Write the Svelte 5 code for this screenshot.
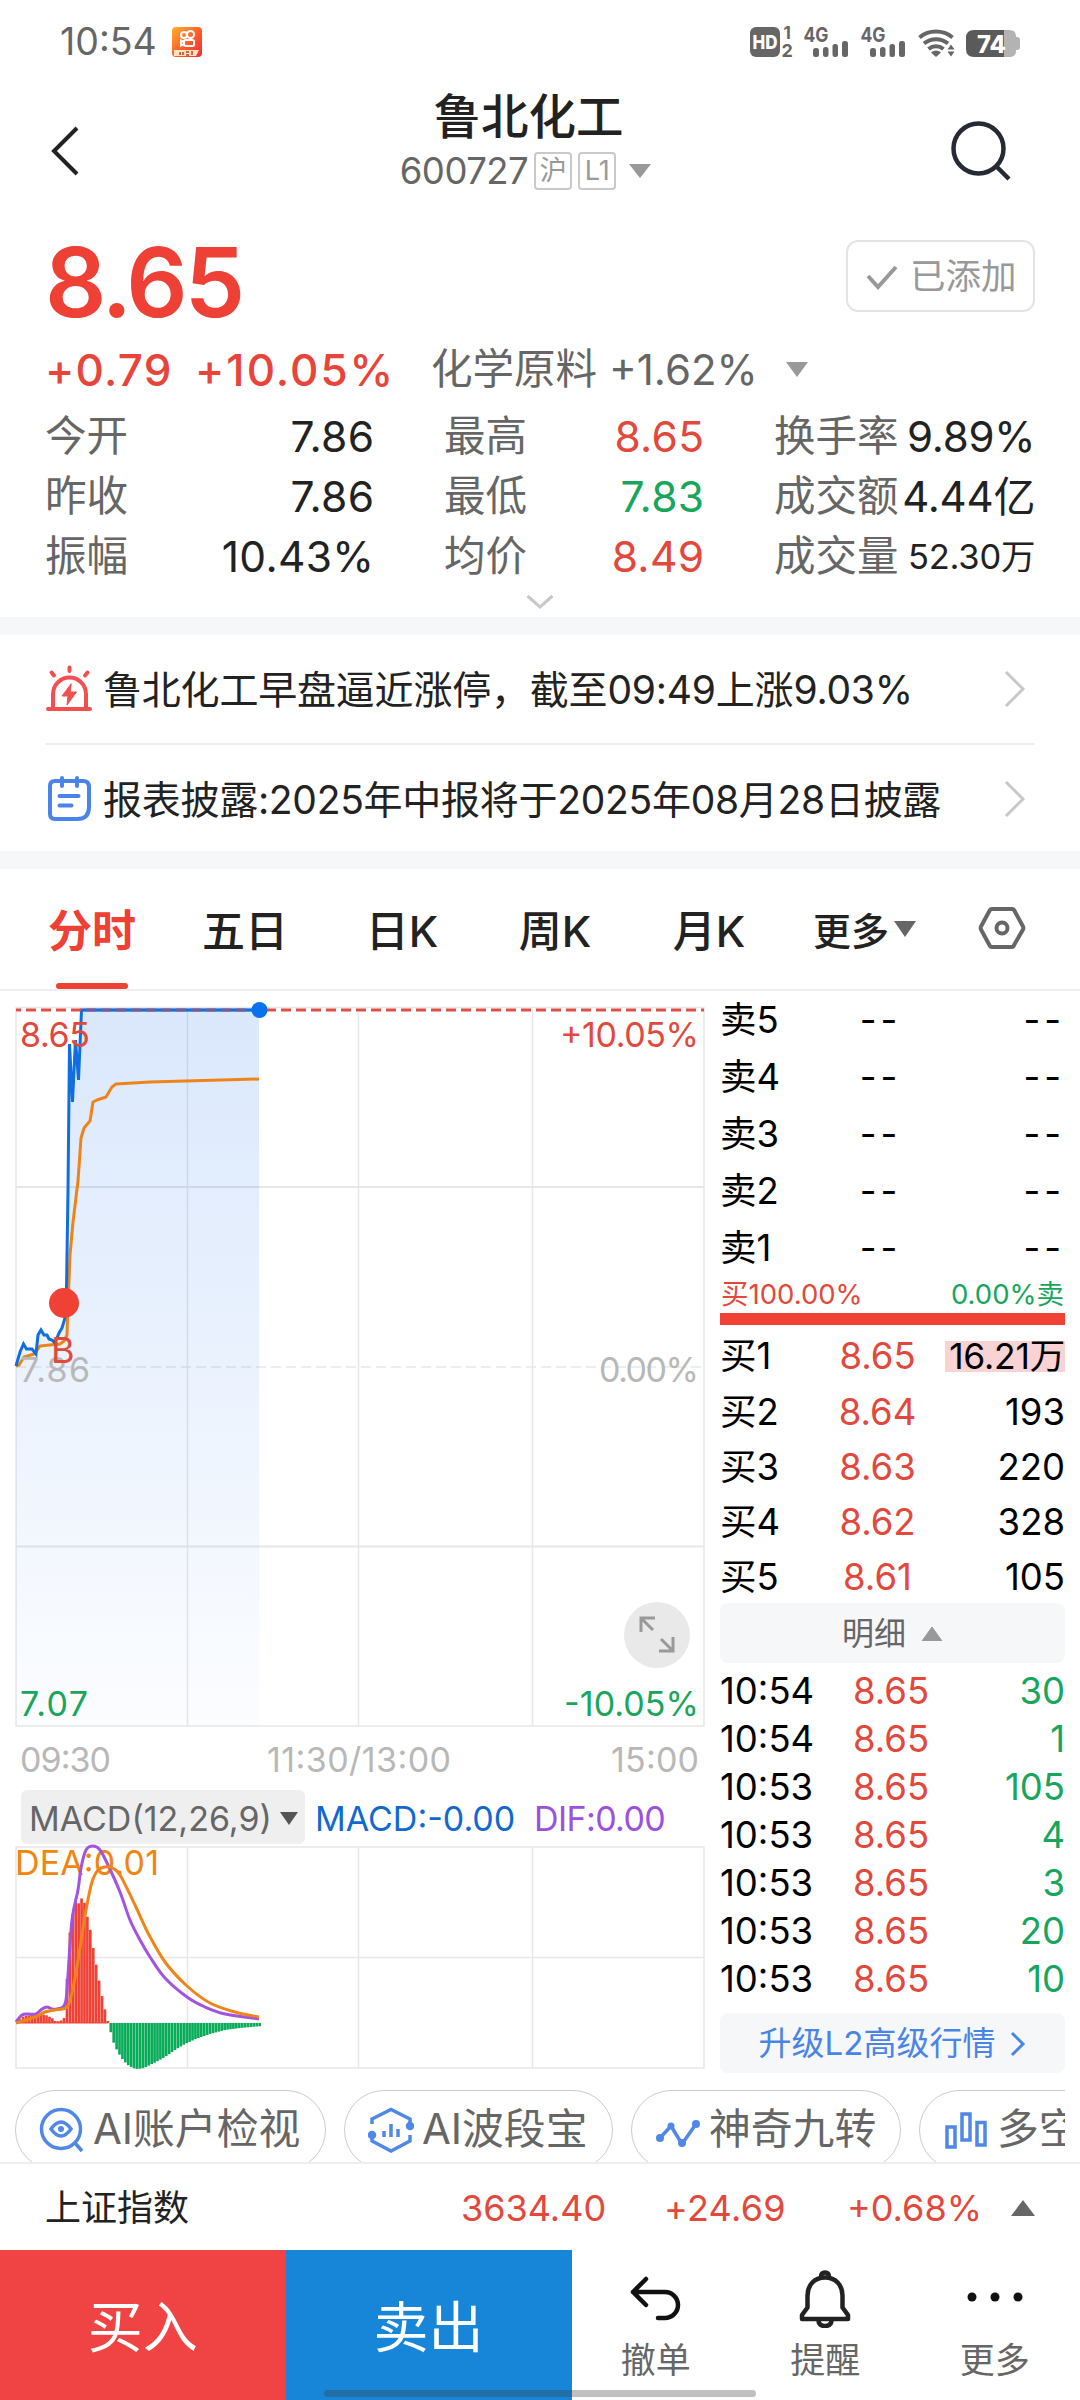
<script lang="ts">
	type Stat = { label: string; value: string; tone?: string; small?: boolean };

	const stats: Stat[] = [
		{ label: '今开', value: '7.86' },
		{ label: '最高', value: '8.65', tone: 'up' },
		{ label: '换手率', value: '9.89%' },
		{ label: '昨收', value: '7.86' },
		{ label: '最低', value: '7.83', tone: 'down' },
		{ label: '成交额', value: '4.44亿' },
		{ label: '振幅', value: '10.43%' },
		{ label: '均价', value: '8.49', tone: 'up' },
		{ label: '成交量', value: '52.30万', small: true }
	];

	const tabs = ['分时', '五日', '日K', '周K', '月K'];
	let activeTab = $state('分时');

	const asks = ['卖5', '卖4', '卖3', '卖2', '卖1'];
	const bids = [
		{ label: '买1', price: '8.65', volume: '16.21万', hot: true },
		{ label: '买2', price: '8.64', volume: '193' },
		{ label: '买3', price: '8.63', volume: '220' },
		{ label: '买4', price: '8.62', volume: '328' },
		{ label: '买5', price: '8.61', volume: '105' }
	];
	const ticks = [
		['10:54', '8.65', '30'],
		['10:54', '8.65', '1'],
		['10:53', '8.65', '105'],
		['10:53', '8.65', '4'],
		['10:53', '8.65', '3'],
		['10:53', '8.65', '20'],
		['10:53', '8.65', '10']
	];

	// chart series, in page pixels
	const price: number[][] = [
		[16, 1366], [20, 1352], [23.5, 1344], [26.5, 1349], [32, 1349], [36, 1354], [38, 1335], [41, 1330],
		[44, 1335], [47, 1335], [49, 1339], [52, 1340], [55, 1343], [59, 1333], [62, 1328], [65, 1318],
		[66.5, 1288], [68, 1190], [69.5, 1044], [72.5, 1102], [75.5, 1040], [78.5, 1080], [81.5, 1010], [259, 1010]
	];
	const average: number[][] = [
		[16, 1366], [19, 1365], [24, 1357], [34, 1354], [40, 1346], [50, 1345], [60, 1344], [64, 1341],
		[67, 1335], [68, 1305], [70, 1255], [73, 1222], [78, 1181], [81, 1138], [84, 1128], [90, 1121],
		[93, 1102], [97, 1100], [106, 1097], [112, 1087], [116, 1084], [150, 1082], [259, 1079]
	];
	const dif: number[][] = [
		[16, 2022], [22, 2015], [28, 2014], [36, 2014], [42, 2009], [47, 2007], [52, 2009], [57, 2009],
		[63, 2007], [66, 2000], [68, 1975], [72, 1920], [78, 1890], [81, 1868], [86, 1850], [93, 1846],
		[100, 1850], [108, 1865], [120, 1892], [130, 1920], [140, 1940], [150, 1957], [165, 1978],
		[187, 1997], [205, 2007], [225, 2014], [259, 2019]
	];
	const dea: number[][] = [
		[16, 2023], [35, 2017], [45, 2012], [55, 2010], [66, 2008], [70, 2000], [75, 1978], [80, 1948],
		[86, 1910], [92, 1882], [98, 1870], [105, 1867], [112, 1868], [120, 1875], [135, 1905],
		[148, 1933], [165, 1962], [187, 1986], [210, 2003], [235, 2012], [259, 2017]
	];
	const histogram: number[][] = [
		[16, 0], [24, 7], [40, 9], [46, 8], [52, 5], [56, 1.5], [60, 2], [64, 4], [66, 20], [68.5, 78],
		[71, 99], [75, 121], [78, 118], [81, 125], [84, 123], [87, 108], [89.5, 99], [92, 83], [95, 65],
		[98, 49], [101, 32], [104, 18], [107, 5], [110, -5], [112, -15], [115, -23], [118, -29],
		[121, -34], [124, -38], [128, -42], [133, -45], [138, -46], [144, -45], [150, -42], [157, -38.5],
		[165, -34], [175, -27], [185, -21], [197, -15.5], [210, -11], [225, -7], [240, -5], [262, -3]
	];

	const line = (pts: number[][]) => pts.map((p) => p.join(',')).join(' ');

	function sample(pts: number[][], x: number) {
		for (let i = 1; i < pts.length; i++) {
			const [x0, y0] = pts[i - 1];
			const [x1, y1] = pts[i];
			if (x <= x1) return y0 + ((y1 - y0) * (x - x0)) / (x1 - x0);
		}
		return 0;
	}

	function smooth(pts: number[][]) {
		let d = `M${pts[0]}`;
		for (let i = 1; i < pts.length; i++) {
			const a = pts[i - 2] ?? pts[i - 1];
			const [b, c] = [pts[i - 1], pts[i]];
			const e = pts[i + 1] ?? c;
			d += `C${b[0] + (c[0] - a[0]) / 6},${b[1] + (c[1] - a[1]) / 6} ${c[0] - (e[0] - b[0]) / 6},${c[1] - (e[1] - b[1]) / 6} ${c}`;
		}
		return d;
	}

	const bars = Array.from({ length: 84 }, (_, i) => {
		const x = 16 + i * 2.92;
		return { x, h: sample(histogram, x + 1.4) };
	});
	const area = `16,1726 ${line(price)} 259,1726`;
</script>

<div class="screen">
	<div class="status">
		<span class="clock">10:54</span>
		<svg class="app-badge" width="30" height="30" viewBox="0 0 30 30">
			<defs>
				<linearGradient id="badge" x1="0" y1="0" x2="1" y2="1">
					<stop offset="0" stop-color="#ffb02e" />
					<stop offset="0.55" stop-color="#ff5a2c" />
					<stop offset="1" stop-color="#f52a3c" />
				</linearGradient>
			</defs>
			<rect width="30" height="30" rx="4" fill="url(#badge)" />
			<g fill="none" stroke="#fff" stroke-width="2">
				<circle cx="12" cy="8" r="3" />
				<circle cx="18.5" cy="7.5" r="3.5" />
				<rect x="12" y="13" width="10" height="6" rx="1.5" />
				<path d="M12 15l-3-1.500v5l3-1.500" />
			</g>
			<path d="M2 23h25l-3 6H2z" fill="#ffe3bd" />
			<path d="M8 25v3M11 25v3M14 25h3M14 28h3M20 24v4" stroke="#d43a20" stroke-width="1.500" />
		</svg>
		<svg class="signals" width="280" height="40" viewBox="745 22 280 40">
			<g fill="#666">
				<rect x="750" y="27" width="30" height="30" rx="6" />
				<text x="752.500" y="49" font-size="19" font-weight="800" fill="#fff" textLength="25" lengthAdjust="spacingAndGlyphs">HD</text>
				<text x="783.500" y="39" font-size="17" font-weight="700">1</text>
				<text x="781.500" y="56.500" font-size="18" font-weight="700">2</text>
				{#each [0, 57] as dx}
					<g transform="translate({dx} 0)">
						<text x="803.500" y="42" font-size="20" font-weight="700" textLength="25" lengthAdjust="spacingAndGlyphs">4G</text>
						<rect x="813" y="48" width="6" height="9" rx="2.500" />
						<rect x="823" y="47" width="5.500" height="10" rx="2.500" />
						<rect x="832.500" y="44" width="5.500" height="13" rx="2.500" />
						<rect x="842" y="41" width="6" height="16" rx="2.500" />
					</g>
				{/each}
				<path d="M936 57l-5-4.500a8 8 0 0 1 10 0z" />
			</g>
			<g fill="none" stroke="#666" stroke-width="4">
				<path d="M919.500 37.500a26 26 0 0 1 33 0" />
				<path d="M924 43.500a19 19 0 0 1 24 0" />
				<path d="M928.500 49a12 12 0 0 1 15 0" />
			</g>
			<path d="M947.500 49.500l3.500-5 3.500 5zM947.500 51.500l3.500 5 3.500-5z" fill="#666" />
			<path d="M1004 30h5q7 0 7 6v1h1q3 0 3 3v7q0 3-3 3h-1v1q0 6-7 6h-5z" fill="#b3b3b3" />
			<path d="M1004 30h-30q-8 0-8 8v11q0 8 8 8h30z" fill="#5a5a5a" />
			<text x="977" y="52.500" font-size="24" font-weight="800" fill="#fff" textLength="29" lengthAdjust="spacingAndGlyphs">74</text>
		</svg>
	</div>

	<header class="header">
		<button class="icon-btn" aria-label="返回">
			<svg width="30" height="52" viewBox="0 0 30 52"><path d="M27 3L4 26l23 23" fill="none" stroke="#222" stroke-width="4" /></svg>
		</button>
		<div class="heading">
			<h1>鲁北化工</h1>
			<div class="code">
				<span class="code-no">600727</span>
				<span class="tag">沪</span>
				<span class="tag">L1</span>
				<svg width="24" height="14" viewBox="0 0 24 14"><path d="M1 0h22L12 14z" fill="#999" /></svg>
			</div>
		</div>
		<button class="icon-btn" aria-label="搜索">
			<svg width="62" height="62" viewBox="0 0 62 62" fill="none" stroke="#262a35" stroke-width="4.500">
				<circle cx="28.500" cy="28.500" r="25" />
				<path d="M46 46l13 13" />
			</svg>
		</button>
	</header>

	<section class="quote">
		<div class="price-row">
			<span class="last">8.65</span>
			<button class="added">
				<svg width="32" height="26" viewBox="0 0 32 26"><path d="M2 12l10 11L30 3" fill="none" stroke="#999" stroke-width="4" /></svg>
				已添加
			</button>
		</div>
		<div class="change-row">
			<span class="diff">+0.79</span>
			<span class="diff pct">+10.05%</span>
			<span class="industry">化学原料</span>
			<span class="industry-pct">+1.62%</span>
			<svg width="24" height="15" viewBox="0 0 24 15"><path d="M1 0h22L12 15z" fill="#999" /></svg>
		</div>
		<div class="stats">
			{#each stats as s}
				<div class="stat">
					<span class="stat-label">{s.label}</span>
					<span class="stat-value {s.tone ?? ''}" class:small={s.small}>{s.value}</span>
				</div>
			{/each}
		</div>
		<svg class="fold" width="28" height="16" viewBox="0 0 28 16"><path d="M1.500 2L14 13 26.500 2" fill="none" stroke="#c8c8c8" stroke-width="3" /></svg>
	</section>

	<section class="news">
		<div class="news-row first">
			<svg width="48" height="48" viewBox="0 0 48 48" fill="none" stroke="#f25050" stroke-width="4" stroke-linecap="round">
				<path d="M8 43V29a16 16 0 0 1 33 0v14" />
				<path d="M3 44h42M24.500 2.500v3.500M6.500 7.500l2.500 3M42.500 7.500L40 10.500" />
				<path d="M26 19l-9 12h6l-1 9 9.500-13h-6z" fill="#f25050" stroke-width="1" />
			</svg>
			<span class="news-a">鲁北化工早盘逼近涨停，截至09:49上涨9.03%</span>
			<svg class="go" width="22" height="38" viewBox="0 0 22 38"><path d="M2 2l17 17L2 36" fill="none" stroke="#c8c8c8" stroke-width="3" /></svg>
		</div>
		<div class="news-row">
			<svg width="48" height="48" viewBox="0 0 48 48" fill="none" stroke="#4a83ea" stroke-width="4" stroke-linecap="round">
				<path d="M10 6h28q6 0 6 6v20q0 12-12 12H10q-5 0-5-5V11q0-5 5-5z" />
				<path d="M17 3v8M32 3v8M14.500 21h19M14.500 30.500h12" />
			</svg>
			<span class="news-b">报表披露:2025年中报将于2025年08月28日披露</span>
			<svg class="go" width="22" height="38" viewBox="0 0 22 38"><path d="M2 2l17 17L2 36" fill="none" stroke="#c8c8c8" stroke-width="3" /></svg>
		</div>
	</section>

	<nav class="tabs">
		{#each tabs as tab}
			<button class="tab" class:active={tab === activeTab} onclick={() => (activeTab = tab)}>{tab}</button>
		{/each}
		<div class="more">
			更多
			<svg width="24" height="16" viewBox="0 0 24 16"><path d="M1 0h22L12 16z" fill="#666" /></svg>
		</div>
		<svg class="gear" width="48" height="44" viewBox="0 0 48 44" fill="none" stroke="#666" stroke-width="4">
			<path d="M14 3h20q1.500 0 2.200 1.300L45 20.500q.7 1.500 0 3l-8.800 15.200Q35.500 41 34 41H14q-1.500 0-2.200-1.300L3 23.500q-.7-1.500 0-3l8.800-16.200Q12.500 3 14 3z" />
			<circle cx="24" cy="22" r="5.500" />
		</svg>
	</nav>

	<main class="board">
		<div class="charts">
			<svg class="minute" width="712" height="793" viewBox="0 991 712 793">
				<defs>
					<linearGradient id="fill" x1="0" y1="0" x2="0" y2="1">
						<stop offset="0" stop-color="#1b6ff0" stop-opacity="0.16" />
						<stop offset="0.5" stop-color="#1b6ff0" stop-opacity="0.09" />
						<stop offset="1" stop-color="#1b6ff0" stop-opacity="0.015" />
					</linearGradient>
				</defs>
				<g fill="none" stroke="#e6e7e9" stroke-width="1.500">
					<rect x="16" y="1007.500" width="688" height="718.500" />
					<path d="M16 1187h688M16 1546.500h688" stroke-width="2" />
					<path d="M187.500 1010v716M358.500 1010v716M532.500 1010v716" />
					<path d="M16 1367h688" stroke-dasharray="10 5" />
				</g>
				<polygon points={area} fill="url(#fill)" />
				<polyline points={line(average)} fill="none" stroke="#ee8418" stroke-width="3" stroke-linejoin="round" />
				<polyline points={line(price)} fill="none" stroke="#0f6fe0" stroke-width="3" />
				<path d="M16 1010h688" stroke="#dd5045" stroke-width="3" stroke-dasharray="10 5" stroke-dashoffset="5" />
				<path d="M82 1010h178" stroke="#0f6fe6" stroke-width="3" stroke-opacity="0.55" />
				<circle cx="259.500" cy="1010" r="8" fill="#0b72ee" />
				<circle cx="64" cy="1303" r="15" fill="#f04134" />

				<g font-size="34">
					<text x="20" y="1046.500" class="t-up" textLength="70">8.65</text>
					<text x="560" y="1046.500" class="t-up" textLength="139">+10.05%</text>
					<text x="20" y="1381.500" class="t-mute" textLength="70">7.86</text>
					<text x="599" y="1381.500" class="t-mute" textLength="100">0.00%</text>
					<text x="20" y="1715.500" class="t-down" textLength="68">7.07</text>
					<text x="564" y="1715.500" class="t-down" textLength="135">-10.05%</text>
					<text x="20" y="1771.500" class="t-mute" textLength="91">09:30</text>
					<text x="267" y="1771.500" class="t-mute" textLength="184">11:30/13:00</text>
					<text x="611" y="1771.500" class="t-mute" textLength="88">15:00</text>
				</g>
				<text x="51" y="1363" font-size="36" class="t-up">B</text>

				<circle cx="657" cy="1635" r="33" fill="#e9e9e9" />
				<path d="M641 1632v-14h14M641 1618l12 12M673 1637v14h-14M673 1651l-12-12" fill="none" stroke="#999" stroke-width="3" />
			</svg>

			<div class="indicator">
				<span class="chip">
					MACD(12,26,9)
					<svg width="18" height="13" viewBox="0 0 18 13"><path d="M0 0h18L9 13z" fill="#555" /></svg>
				</span>
				<span class="macd">MACD:-0.00</span>
				<span class="dif">DIF:0.00</span>
			</div>

			<svg class="macd-chart" width="712" height="230" viewBox="0 1844 712 230">
				<g fill="none" stroke="#e6e7e9" stroke-width="1.500">
					<rect x="16" y="1847" width="688" height="221" />
					<path d="M16 1957.500h688M187.500 1847v221M358.500 1847v221M532.500 1847v221" />
				</g>
				<text x="15" y="1875" font-size="34" fill="#f08510" textLength="144">DEA:0.01</text>
				{#each bars as b}
					<rect
						x={b.x}
						y={b.h > 0 ? 2023 - b.h : 2023}
						width="2.650"
						height={Math.max(Math.abs(b.h), 1)}
						fill={b.h > 0 ? '#f04134' : '#08ab58'}
					/>
				{/each}
				<path d="M16 2023h92" stroke="#f04134" />
				<path d={smooth(dif)} fill="none" stroke="#a054e0" stroke-width="3" />
				<path d={smooth(dea)} fill="none" stroke="#f08418" stroke-width="3" />
			</svg>
		</div>

		<aside class="book">
			{#each asks as ask}
				<div class="ask">
					<span>{ask}</span>
					<span class="dash mid">--</span>
					<span class="dash">--</span>
				</div>
			{/each}
			<div class="ratio">
				<span class="up">买100.00%</span>
				<span class="down">0.00%卖</span>
			</div>
			<div class="ratio-bar"><div class="ratio-fill" style="width: 100%"></div></div>
			<div class="bids">
				{#each bids as bid}
					<div class="bid">
						<span>{bid.label}</span>
						<span class="up mid">{bid.price}</span>
						<span class="volume" class:hot={bid.hot}>{bid.volume}</span>
					</div>
				{/each}
			</div>
			<div class="detail">
				明细
				<svg width="22" height="15" viewBox="0 0 22 15"><path d="M1 15h20L11 1z" fill="#999" stroke="#999" stroke-linejoin="round" /></svg>
			</div>
			<div class="ticks">
				{#each ticks as [time, p, vol]}
					<div class="tick">
						<span>{time}</span>
						<span class="up">{p}</span>
						<span class="down">{vol}</span>
					</div>
				{/each}
			</div>
			<div class="upgrade">
				升级L2高级行情
				<svg width="16" height="26" viewBox="0 0 16 26"><path d="M2 2l11 11L2 24" fill="none" stroke="#4a84e4" stroke-width="3" /></svg>
			</div>
		</aside>
	</main>

	<div class="pills">
		<div class="pill" style="width: 311px">
			<svg width="46" height="46" viewBox="0 0 46 46" fill="none" stroke="#4f88e6" stroke-width="3.500">
				<circle cx="22" cy="22" r="19.500" />
				<path d="M36 36l7 8" />
				<path d="M12 22q10-14 20 0-10 14-20 0z" />
				<circle cx="22" cy="22" r="3" fill="#4f88e6" stroke="none" />
			</svg>
			AI账户检视
		</div>
		<div class="pill" style="width: 269px">
			<svg width="46" height="46" viewBox="0 0 46 46" fill="none" stroke="#4f88e6" stroke-width="3.500">
				<path d="M4 17v-5L23 2.500 42 12v6M42 28v6L23 44 4 34v-5" />
				<path d="M16 30v-6M23 30V17M30 30v-8" />
				<circle cx="42" cy="19" r="2.500" fill="#4f88e6" />
				<circle cx="4" cy="28" r="2.500" fill="#4f88e6" />
			</svg>
			AI波段宝
		</div>
		<div class="pill" style="width: 270px">
			<svg width="46" height="46" viewBox="0 0 46 46" fill="none" stroke="#4f88e6" stroke-width="3.500" stroke-linejoin="round">
				<path d="M5 31l11-12 11 18 14-20" />
				<g fill="#4f88e6" stroke="none">
					<circle cx="5" cy="31" r="4" />
					<circle cx="16" cy="19" r="3.500" />
					<circle cx="27" cy="36" r="4" />
					<circle cx="41" cy="17" r="4" />
				</g>
			</svg>
			神奇九转
		</div>
		<div class="pill" style="width: 270px">
			<svg width="46" height="46" viewBox="0 0 46 46" fill="none" stroke="#4f88e6" stroke-width="3.500">
				<path d="M4 20h8v20H4zM19 7h8v26h-8zM34 15.500h8V38h-8z" />
			</svg>
			多空
		</div>
	</div>

	<div class="index">
		<span class="index-name">上证指数</span>
		<span class="up idx-a">3634.40</span>
		<span class="up idx-b">+24.69</span>
		<span class="up idx-c">+0.68%</span>
		<svg width="26" height="16" viewBox="0 0 26 16"><path d="M1 16h24L13 0z" fill="#666" /></svg>
	</div>

	<footer class="actions">
		<button class="buy">买入</button>
		<button class="sell">卖出</button>
		<div class="tools">
			<div class="tool">
				<svg width="60" height="60" viewBox="0 0 60 60" fill="none" stroke="#111" stroke-width="4.500" stroke-linecap="round" stroke-linejoin="round">
					<path d="M20 11L7 24l13 13M7 24h32a12.500 12.500 0 0 1 0 26h-7" />
				</svg>
				撤单
			</div>
			<div class="tool">
				<svg width="60" height="60" viewBox="0 0 60 60" fill="none" stroke="#222" stroke-width="4.500" stroke-linejoin="round">
					<path d="M30 9.500c-11 0-17.500 8-17.500 18v12L7 47v4h46v-4l-5.500-7.500v-12c0-10-6.500-18-17.500-18z" />
					<path d="M26 9q0-4.500 4-4.500T34 9M23.500 52q0 6 6.500 6t6.500-6" />
				</svg>
				提醒
			</div>
			<div class="tool">
				<svg width="60" height="60" viewBox="0 0 60 60" fill="#111">
					<circle cx="7" cy="29" r="4.500" />
					<circle cx="30" cy="29" r="4.500" />
					<circle cx="53" cy="29" r="4.500" />
				</svg>
				更多
			</div>
		</div>
		<div class="home-bar"></div>
	</footer>
</div>

<style>
	:global(body) {
		margin: 0;
		background: #fff;
	}

	.screen {
		width: 1080px;
		height: 2400px;
		overflow: hidden;
		display: flex;
		flex-direction: column;
		background: #fff;
		color: #222;
		font-family: Inter, 'Noto Sans CJK SC', sans-serif;
		line-height: 1;
		white-space: nowrap;
	}

	.screen > * {
		flex: none;
		box-sizing: border-box;
	}

	svg {
		display: block;
		flex: none;
	}

	button {
		border: 0;
		padding: 0;
		background: none;
		color: inherit;
		font: inherit;
	}

	.up { color: #e2483b; }
	.down { color: #17a65c; }

	.status {
		height: 84px;
		display: flex;
		align-items: center;
		padding: 0 55px 0 60px;
		color: #666;
	}

	.clock { font-size: 37.500px; width: 112px; }
	.signals { margin-left: auto; }

	.header {
		height: 136px;
		display: grid;
		grid-template-columns: 200px 1fr 200px;
		align-items: center;
		padding: 0 68px 0 50px;
	}

	.header .icon-btn { margin-top: -3px; }
	.header .icon-btn:last-child { justify-self: end; }

	.heading {
		display: flex;
		flex-direction: column;
		align-items: center;
		align-self: start;
		height: 136px;
		margin-right: 5px;
	}

	h1 {
		margin: 0;
		padding-top: 5px;
		font-size: 47.500px;
		font-weight: 500;
		line-height: 56px;
	}

	.code {
		display: flex;
		align-items: center;
		height: 40px;
		gap: 6px;
		margin: 6px 5px 0 0;
		color: #666;
		font-size: 36.500px;
	}

	.code-no { letter-spacing: -0.500px; }
	.code svg { margin: 0 0 0 6px; }

	.tag {
		width: 38px;
		height: 38px;
		box-sizing: border-box;
		border: 2px solid #c9c9c9;
		border-radius: 4px;
		text-align: center;
		font-size: 27px;
		line-height: 34px;
		color: #999;
	}

	.quote {
		height: 397px;
		padding: 0 45px;
	}

	.price-row {
		display: flex;
		justify-content: space-between;
		height: 112px;
		padding-top: 13px;
		box-sizing: border-box;
	}

	.last {
		font-size: 96px;
		font-weight: 600;
		line-height: 98px;
		color: #ee4034;
		letter-spacing: -3px;
	}

	.added {
		display: flex;
		align-items: center;
		gap: 12px;
		width: 189px;
		height: 72px;
		margin-top: 7px;
		padding: 2px 0 0 18px;
		box-sizing: border-box;
		border: 2px solid #e4e4e4;
		border-radius: 12px;
		color: #999;
		font-size: 35.500px;
	}

	.change-row {
		display: flex;
		align-items: center;
		height: 75px;
	}

	.diff { color: #e8443a; font-size: 44px; font-weight: 500; width: 150px; letter-spacing: 1.200px; }
	.diff.pct { width: 236px; letter-spacing: 2px; }
	.industry { font-size: 41.500px; color: #666; width: 178px; }
	.industry-pct { font-size: 42px; color: #666; width: 176px; }

	.stats {
		display: grid;
		grid-template-columns: 329px 260px 261px;
		justify-content: space-between;
		height: 180px;
		grid-auto-rows: 60px;
	}

	.stat {
		display: flex;
		justify-content: space-between;
		align-items: center;
		font-size: 41.500px;
	}

	.stat-label { color: #666; }
	.stat-value { font-size: 42.500px; letter-spacing: 0.300px; margin-right: -0.300px; }
	.stat:nth-child(3n) .stat-value { font-size: 42px; letter-spacing: -0.200px; }
	.stat .stat-value.small,
	.stat:nth-child(3n) .stat-value.small { font-size: 34.500px; }
	.fold { margin: 7px auto 0; }

	.news {
		border: solid #f6f7f9;
		border-width: 18px 0;
		height: 252px;
		padding: 0 45px;
	}

	.news-row {
		display: flex;
		align-items: center;
		height: 108px;
		gap: 10px;
		font-size: 39px;
	}

	.news-row.first { border-bottom: 2px solid #eee; }
	.news-row .go { margin: 0 9px 0 auto; }
	.news-row span { padding-top: 1px; }
	.news-a { letter-spacing: -0.200px; }
	.news-b { letter-spacing: -0.280px; }

	.tabs {
		display: grid;
		grid-template-columns: 156px 150px 164px 142px 166px 186px 48px;
		align-items: center;
		height: 122px;
		padding-left: 14px;
		border-bottom: 2px solid #eee;
	}

	.tab {
		position: relative;
		height: 120px;
		padding-top: 4px;
		font-size: 43px;
		font-weight: 500;
	}

	.tab.active { color: #ee4034; font-weight: 700; font-size: 44px; }

	.tab.active::after {
		content: '';
		position: absolute;
		left: 42px;
		bottom: 0;
		width: 72px;
		height: 6px;
		border-radius: 3px;
		background: #ee4034;
	}

	.more {
		display: flex;
		align-items: center;
		gap: 4px;
		padding: 3px 0 0 21px;
		font-size: 38px;
		font-weight: 500;
	}

	.more svg { margin-top: -4px; }
	.gear { margin-top: -3px; }

	.board {
		display: flex;
		height: 1083px;
	}

	.charts {
		width: 720px;
	}

	.charts svg { overflow: visible; }
	.t-up { fill: #e2483b; }
	.t-down { fill: #17a65c; }
	.t-mute { fill: #b8b8b8; }

	.indicator {
		display: flex;
		align-items: center;
		height: 54px;
		padding: 6px 0 0 21px;
		font-size: 34px;
	}

	.chip {
		display: flex;
		align-items: center;
		justify-content: space-between;
		width: 284px;
		height: 54px;
		box-sizing: border-box;
		padding: 3px 7px 0 8px;
		margin-right: 10px;
		border-radius: 6px;
		background: #efefef;
		color: #666;
		letter-spacing: 0;
	}

	.macd { width: 219px; color: #1169d0; padding-top: 3px; }
	.dif { color: #9b51e0; padding-top: 3px; letter-spacing: -0.600px; }

	.book {
		width: 345px;
		color: #000;
		font-size: 36.500px;
	}

	.ask,
	.bid {
		display: grid;
		grid-template-columns: 100px 115px 130px;
		align-items: center;
		height: 57px;
	}

	.ask { padding-top: 2px; box-sizing: border-box; }

	.ask > :last-child,
	.bid > :last-child { justify-self: end; }
	.mid { justify-self: center; }
	.dash { letter-spacing: 4px; }
	.dash.mid { padding-left: 6px; }
	.bid { height: 55.200px; }

	.ratio {
		display: flex;
		justify-content: space-between;
		align-items: center;
		height: 37px;
		font-size: 27.500px;
		padding: 1px 1px 0 1px;
		box-sizing: border-box;
	}

	.ratio-bar { height: 12px; }
	.ratio-fill { height: 100%; background: #f04134; }
	.bids { padding-top: 4px; height: 278px; box-sizing: border-box; }

	.volume.hot {
		width: 120px;
		height: 31px;
		line-height: 31px;
		text-align: right;
		font-size: 35.500px;
		letter-spacing: -0.200px;
		background: #f9d3d3;
	}

	.detail,
	.upgrade {
		display: flex;
		align-items: center;
		justify-content: center;
		gap: 15px;
		height: 60px;
		padding-top: 1px;
		box-sizing: border-box;
		border-radius: 8px;
		background: #f6f7f9;
		font-size: 32px;
		color: #666;
	}

	.ticks { padding: 4px 0 10px; }

	.tick {
		display: grid;
		grid-template-columns: 133px 80px 132px;
		align-items: center;
		height: 48px;
	}

	.tick > :last-child { justify-self: end; }
	.upgrade { color: #4a84e4; font-size: 33px; }

	.pills {
		display: flex;
		gap: 18px;
		height: 88px;
		padding-top: 16px;
		margin: 0 15px;
		overflow: hidden;
	}

	.pill {
		display: flex;
		flex: none;
		align-items: center;
		gap: 8px;
		height: 80px;
		padding-left: 23px;
		box-sizing: border-box;
		border: 1.500px solid #ccc;
		border-radius: 40px;
		color: #666;
		font-size: 41.800px;
	}

	.index {
		display: flex;
		align-items: center;
		height: 88px;
		padding: 2px 44px 0 45px;
		border-top: 2px solid #eee;
		font-size: 36px;
	}

	.index-name { width: 416px; }
	.idx-a { width: 203px; }
	.idx-b { width: 183px; letter-spacing: 0.300px; }
	.idx-c { width: 163px; }

	.actions {
		position: relative;
		display: flex;
		height: 150px;
	}

	.buy,
	.sell {
		width: 286px;
		padding-top: 4px;
		background: #f04343;
		color: #fff;
		font-size: 55px;
		font-weight: 400;
	}

	.sell { background: #1886d8; }

	.tools {
		flex: 1;
		display: grid;
		grid-template-columns: repeat(3, 169.500px);
	}

	.tool {
		display: flex;
		flex-direction: column;
		align-items: center;
		gap: 15px;
		padding-top: 18px;
		margin-left: -1px;
		color: #666;
		font-size: 35px;
	}

	.home-bar {
		position: absolute;
		left: 324px;
		bottom: 3px;
		width: 432px;
		height: 7px;
		border-radius: 4px;
		background: rgba(60, 60, 60, 0.320);
	}
</style>
